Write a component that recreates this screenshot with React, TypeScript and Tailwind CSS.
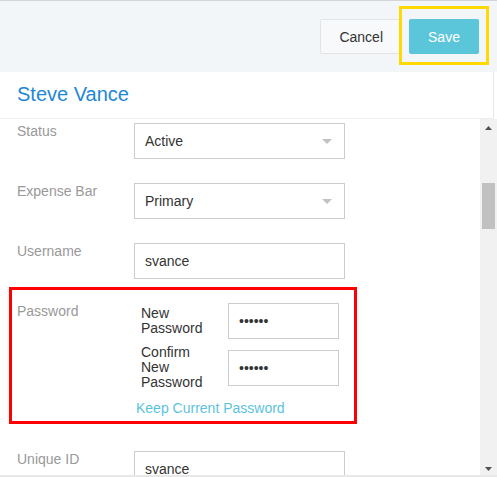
import React from "react";

function Caret() {
  return (
    <svg width="10" height="5" viewBox="0 0 10 5" className="block">
      <polygon points="0,0 10,0 5,5" fill="#c2c2c2" />
    </svg>
  );
}

function SelectBox({ value }: { value: string }) {
  return (
    <div className="w-[211px] h-[36px] border border-[#cccccc] bg-white flex items-center justify-between pl-[10px] pr-[12px] text-sm text-[#333333]">
      <span>{value}</span>
      <Caret />
    </div>
  );
}

function TextBox({ value, w = "w-[211px]" }: { value: string; w?: string }) {
  return (
    <div className={`${w} h-[36px] border border-[#cccccc] bg-white flex items-center pl-[10px] text-sm text-[#333333]`}>
      {value}
    </div>
  );
}

function Label({ children }: { children: React.ReactNode }) {
  return <div className="w-[134px] shrink-0 pl-[17px] text-sm leading-4 text-[#999999]">{children}</div>;
}

export default function App() {
  return (
    <div className="w-[497px] h-[477px] overflow-hidden bg-white flex flex-col font-['Liberation_Sans',Arial,sans-serif]">
      <div className="h-px bg-[#d2d4d6]" />

      {/* action bar */}
      <div className="h-[71px] bg-[#f3f6f9] flex items-center justify-end gap-[7px] pr-[18px]">
        <button className="h-[35px] px-[18px] border border-[#e2e5e8] bg-[#f7f9fb] rounded-[2px] text-sm text-[#333333]">
          Cancel
        </button>
        <div className="relative">
          <button className="h-[35px] w-[70px] bg-[#5bc5da] rounded-[2px] text-sm text-white">Save</button>
          <div className="absolute left-[-10px] right-[-10px] top-[-13px] bottom-[-11px] border-[3px] border-[#ffd900] pointer-events-none" />
        </div>
      </div>

      {/* title */}
      <div className="h-[47px] border-b border-[#eeeeee] border-r mr-[3px] border-r-[#e6e6e6] pl-[17px] pt-[11px] text-[20px] leading-[23px] text-[#1d87d4]">
        Steve Vance
      </div>

      {/* scrolling form */}
      <div className="h-[356px] flex">
        <div className="flex-1 overflow-hidden pt-[4px]">
          <div className="flex mb-6">
            <Label>Status</Label>
            <SelectBox value="Active" />
          </div>
          <div className="flex mb-6">
            <Label>Expense Bar</Label>
            <SelectBox value="Primary" />
          </div>
          <div className="flex mb-6">
            <Label>Username</Label>
            <TextBox value="svance" />
          </div>

          <div className="relative flex">
            <Label>Password</Label>
            <div className="flex flex-col">
              <div className="flex items-center pl-[7px]">
                <div className="w-[87px] pr-[17px] text-sm leading-[15px] text-[#333333]">New Password</div>
                <TextBox value="••••••" w="w-[111px]" />
              </div>
              <div className="flex items-center pl-[7px] mt-[6px]">
                <div className="w-[87px] pr-[17px] text-sm leading-[15px] text-[#333333]">Confirm New Password</div>
                <TextBox value="••••••" w="w-[111px]" />
              </div>
              <div className="mt-[10px] ml-[2px] text-sm leading-4 text-[#5bc3dd]">Keep Current Password</div>
            </div>
            <div className="absolute left-[9px] w-[348px] top-[-16px] bottom-[-8px] border-[3px] border-[#ff0000] pointer-events-none" />
          </div>

          <div className="flex mt-[35px]">
            <Label>Unique ID</Label>
            <TextBox value="svance" />
          </div>
        </div>

        {/* scrollbar */}
        <div className="w-[17px] bg-[#f1f1f1] flex flex-col">
          <div className="h-[17px] flex items-center justify-center">
            <svg width="7" height="4" viewBox="0 0 7 4" className="block">
              <polygon points="3.5,0 7,4 0,4" fill="#505050" />
            </svg>
          </div>
          <div className="flex-1 px-[2px]">
            <div className="mt-[47px] h-[46px] bg-[#c1c1c1]" />
          </div>
          <div className="h-[17px] flex items-end justify-center pb-[4px]">
            <svg width="7" height="4" viewBox="0 0 7 4" className="block">
              <polygon points="0,0 7,0 3.5,4" fill="#505050" />
            </svg>
          </div>
        </div>
      </div>

      <div className="h-[2px] bg-[#e8e8e8]" />
    </div>
  );
}
